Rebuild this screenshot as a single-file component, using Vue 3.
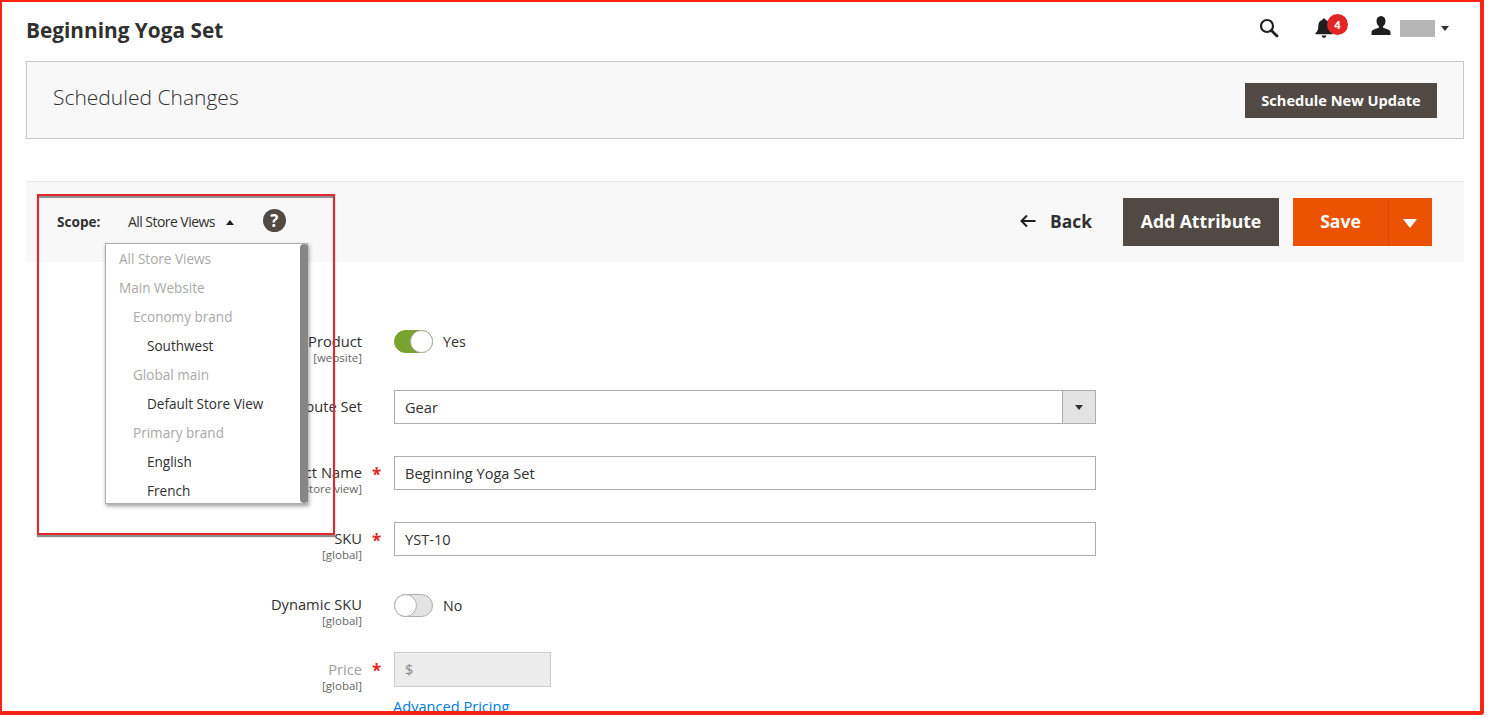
<script setup>
const storeItems = [
  { label: 'All Store Views', level: 0, active: false },
  { label: 'Main Website', level: 0, active: false },
  { label: 'Economy brand', level: 1, active: false },
  { label: 'Southwest', level: 2, active: true },
  { label: 'Global main', level: 1, active: false },
  { label: 'Default Store View', level: 2, active: true },
  { label: 'Primary brand', level: 1, active: false },
  { label: 'English', level: 2, active: true },
  { label: 'French', level: 2, active: true }
]
</script>

<template>
  <div class="frame">
    <header class="topbar">
      <h1 class="title">Beginning Yoga Set</h1>
      <div class="actions">
        <svg class="icon-search" width="20" height="20" viewBox="0 0 20 20" aria-hidden="true">
          <circle cx="8" cy="8" r="6" fill="none" stroke="#1f1f1f" stroke-width="2.2" />
          <path d="M12.4 12.4 18 18" stroke="#1f1f1f" stroke-width="2.8" stroke-linecap="round" />
        </svg>
        <div class="bell">
          <svg width="18" height="22" viewBox="0 0 18 22" aria-hidden="true">
            <path d="M9 1.5c1 0 1.6.7 1.7 1.6 2.7.7 4 3 4 5.700 0 3.700.8 5.600 2.800 7.400v1H.5v-1c2-1.800 2.800-3.700 2.800-7.400 0-2.700 1.300-5 4-5.700C7.400 2.200 8 1.500 9 1.500Z" fill="#1f1f1f" />
            <path d="M6.700 18.600h4.600c0 1.300-1 2.300-2.300 2.300s-2.300-1-2.300-2.300Z" fill="#1f1f1f" />
          </svg>
          <span class="badge">4</span>
        </div>
        <svg class="icon-user" width="20" height="20" viewBox="0 0 20 20" aria-hidden="true">
          <path d="M10 0c2.900 0 4.500 2.200 4.500 5 0 2.300-1 4.300-2.400 5.300v1.500c2.500.9 6.500 2 7.400 3.700V19H.5v-3.500c.9-1.700 4.900-2.800 7.400-3.700v-1.500C6.500 9.300 5.500 7.300 5.500 5 5.500 2.200 7.100 0 10 0Z" fill="#1f1f1f" />
        </svg>
        <span class="user-name"></span>
        <span class="caret-down small"></span>
      </div>
    </header>

    <section class="schedule">
      <h2 class="schedule-title">Scheduled Changes</h2>
      <button class="btn-dark schedule-btn" type="button">Schedule New Update</button>
    </section>

    <section class="toolbar">
      <div class="scope">
        <span class="scope-label">Scope:</span>
        <span class="scope-value">All Store Views</span>
        <span class="caret-up"></span>
        <span class="help">?</span>
      </div>
      <div class="tool-actions">
        <span class="back">
          <svg width="16" height="14" viewBox="0 0 16 14" aria-hidden="true">
            <path d="M15.500 7H2M7 1.500 1.500 7 7 12.500" fill="none" stroke="#1f1f1f" stroke-width="2" />
          </svg>
          Back
        </span>
        <button class="btn-dark attr-btn" type="button">Add Attribute</button>
        <div class="save">
          <span class="save-main">Save</span>
          <span class="save-arrow"><span class="caret-down white"></span></span>
        </div>
      </div>
    </section>

    <form class="form" @submit.prevent>
      <div class="row">
        <div class="label"><span>Enable Product</span><small>[website]</small></div>
        <span class="req"></span>
        <div class="control">
          <span class="toggle on"><i></i></span>
          <span class="toggle-text">Yes</span>
        </div>
      </div>
      <div class="row">
        <div class="label"><span>Attribute Set</span></div>
        <span class="req"></span>
        <div class="select">
          <span class="select-value">Gear</span>
          <span class="select-btn"><span class="caret-down small"></span></span>
        </div>
      </div>
      <div class="row">
        <div class="label"><span>Product Name</span><small>[store view]</small></div>
        <span class="req">*</span>
        <div class="input">Beginning Yoga Set</div>
      </div>
      <div class="row">
        <div class="label"><span>SKU</span><small>[global]</small></div>
        <span class="req">*</span>
        <div class="input">YST-10</div>
      </div>
      <div class="row dense">
        <div class="label"><span>Dynamic SKU</span><small>[global]</small></div>
        <span class="req"></span>
        <div class="control">
          <span class="toggle"><i></i></span>
          <span class="toggle-text">No</span>
        </div>
      </div>
      <div class="row">
        <div class="label muted"><span>Price</span><small>[global]</small></div>
        <span class="req">*</span>
        <div class="price-col">
          <div class="input price">$</div>
          <a class="link" href="#" @click.prevent>Advanced Pricing</a>
        </div>
      </div>
    </form>

    <div class="store-menu">
      <ul class="store-list">
        <li
          v-for="item in storeItems"
          :key="item.label"
          :class="['store-item', 'lvl' + item.level, { active: item.active }]"
        >{{ item.label }}</li>
      </ul>
      <span class="scrollbar"></span>
    </div>
    <div class="annotation"></div>
  </div>
</template>

<style>
html, body { margin: 0; background: #fff; }
</style>

<style scoped>
* { box-sizing: border-box; }
.frame {
  position: relative;
  width: 1484px;
  height: 715px;
  border-style: solid;
  border-color: #fb2218;
  border-width: 2px 4px 4px 2px;
  border-bottom-right-radius: 3px;
  padding: 1px 16px 0 24px;
  overflow: hidden;
  background: #fff;
  font-family: "Open Sans", "Liberation Sans", sans-serif;
  color: #303030;
  font-size: 14px;
}
.topbar {
  height: 58px;
  display: flex;
  align-items: center;
  justify-content: space-between;
}
.title {
  margin: 0 0 2px;
  font-size: 20.8px;
  font-weight: 700;
  color: #303030;
  position: relative;
  top: -1px;
}
.actions {
  display: flex;
  align-items: center;
  padding-right: 15px;
  position: relative;
  top: -4px;
}
.icon-search { margin-right: 36px; }
.bell { position: relative; width: 18px; height: 22px; margin-right: 38px; }
.bell svg { display: block; }
.badge {
  position: absolute;
  left: 12px;
  top: -3px;
  width: 21px;
  height: 21px;
  border-radius: 50%;
  background: #e22626;
  color: #fff;
  font-size: 11px;
  font-weight: 700;
  line-height: 21px;
  text-align: center;
}
.icon-user { margin-right: 9px; position: relative; top: -2px; }
.user-name { width: 35px; height: 17px; background: #b6b6b6; margin-right: 6px; }
.caret-down {
  display: inline-block;
  width: 0;
  height: 0;
  border-left: 6px solid transparent;
  border-right: 6px solid transparent;
  border-top: 8px solid #303030;
}
.caret-down.small { border-left-width: 4px; border-right-width: 4px; border-top-width: 5px; }
.caret-down.white { border-top-color: #fff; border-left-width: 7px; border-right-width: 7px; border-top-width: 9px; }
.caret-up {
  width: 0;
  height: 0;
  border-left: 4px solid transparent;
  border-right: 4px solid transparent;
  border-bottom: 5px solid #1f1f1f;
  margin-left: 11px;
  margin-top: 2px;
}
.schedule {
  height: 78px;
  border: 1px solid #c7c7c7;
  background: #f8f8f8;
  display: flex;
  align-items: center;
  justify-content: space-between;
  padding: 0 26px 0 26px;
}
.schedule-title {
  margin: 0 0 7px;
  font-size: 21px;
  font-weight: 300;
  color: #303030;
}
.btn-dark {
  border: 0;
  background: #514943;
  color: #fff;
  font-family: inherit;
  font-weight: 700;
  padding: 0;
}
.schedule-btn { width: 192px; height: 35px; font-size: 14.6px; margin-top: 0; padding-bottom: 1px; }
.toolbar {
  margin-top: 42px;
  height: 81px;
  background: #f8f8f8;
  border-top: 1px solid #e6e6e6;
  display: flex;
  align-items: center;
  justify-content: space-between;
  padding: 0 32px 0 31px;
}
.scope { display: flex; align-items: center; margin-top: -2px; }
.scope-label { font-weight: 700; font-size: 13.6px; color: #303030; width: 71px; }
.scope-value { font-size: 14px; letter-spacing: -0.55px; color: #303030; }
.help {
  width: 23px;
  height: 23px;
  border-radius: 50%;
  background: #514943;
  color: #fff;
  font-weight: 700;
  font-size: 17px;
  line-height: 23px;
  text-align: center;
  margin: -2px 0 0 29px;
}
.tool-actions { display: flex; align-items: center; }
.back {
  display: flex;
  align-items: center;
  gap: 14px;
  font-size: 17.4px;
  font-weight: 700;
  color: #303030;
  margin-right: 31px;
  margin-top: -2px;
}
.attr-btn { width: 156px; height: 48px; font-size: 17.6px; margin-right: 14px; padding-bottom: 2px; }
.save {
  display: flex;
  width: 139px;
  height: 48px;
  background: #eb5202;
  color: #fff;
  font-size: 17.6px;
  font-weight: 700;
}
.save-main {
  width: 96px;
  border-right: 1px solid #cf4a05;
  display: flex;
  align-items: center;
  justify-content: center;
  padding-bottom: 2px;
}
.save-arrow { flex: 1; display: flex; align-items: center; justify-content: center; padding: 2px 2px 0 0; }
.form { padding-top: 62px; display: flex; flex-direction: column; gap: 32px; }
.row {
  display: grid;
  grid-template-columns: 336px 32px 1fr;
  grid-template-rows: 34px;
  height: 34px;
}
.row.dense { margin-bottom: -2px; }
.label { text-align: right; padding-top: 6px; color: #303030; }
.row:first-child .label { padding-top: 7px; }
.label.muted { padding-top: 7px; }
.label span { display: block; line-height: 20px; font-size: 14.7px; }
.label small { display: block; font-size: 11.5px; line-height: 12px; color: #666; padding-top: 1px; }
.label.muted span { color: #a0a0a0; }
.req { color: #e22626; font-size: 17px; font-weight: 700; padding: 9px 0 0 10px; line-height: 20px; }
.control { display: flex; align-items: center; gap: 10px; }
.toggle {
  position: relative;
  width: 39px;
  height: 23px;
  border-radius: 12px;
  background: #e3e3e3;
  border: 1px solid #adadad;
  display: block;
  margin-top: 1px;
}
.toggle i {
  position: absolute;
  left: -1px;
  top: -1px;
  width: 23px;
  height: 23px;
  border-radius: 50%;
  background: #fff;
  border: 1px solid #adadad;
}
.toggle.on { background: #79a22e; border-color: #79a22e; }
.toggle.on i { left: 15px; }
.toggle-text { font-size: 14.2px; color: #303030; }
.select, .input {
  width: 702px;
  height: 34px;
  border: 1px solid #adadad;
  background: #fff;
  font-size: 14.6px;
  color: #303030;
}
.select { display: flex; align-items: stretch; }
.select-value { flex: 1; padding-left: 10px; line-height: 32px; }
.select-btn {
  width: 33px;
  background: #e3e3e3;
  border-left: 1px solid #adadad;
  display: flex;
  align-items: center;
  justify-content: center;
}
.input { padding-left: 10px; line-height: 32px; }
.price-col { display: flex; flex-direction: column; }
.input.price {
  width: 157px;
  height: 35px;
  background: #ececec;
  border-color: #ccc;
  color: #8a8a8a;
  line-height: 33px;
}
.link {
  color: #007bdb;
  text-decoration: none;
  font-size: 14.6px;
  line-height: 20px;
  margin-top: 9px;
  margin-left: -1px;
}
.store-menu {
  position: absolute;
  left: 103px;
  top: 241px;
  width: 203px;
  height: 261px;
  background: #fff;
  border: 1px solid #adadad;
  box-shadow: 1px 2px 4px rgba(0, 0, 0, 0.4);
}
.store-list { list-style: none; margin: 0; padding: 1px 0 0; }
.store-item {
  height: 29px;
  line-height: 29px;
  font-size: 13.55px;
  color: #a9a9a9;
}
.store-item.lvl0 { padding-left: 13px; }
.store-item.lvl1 { padding-left: 27px; }
.store-item.lvl2 { padding-left: 41px; }
.store-item.active { color: #303030; }
.scrollbar {
  position: absolute;
  right: -1px;
  top: 0;
  bottom: 0;
  width: 8px;
  border-radius: 4px;
  background: #868686;
}
.annotation {
  position: absolute;
  left: 35px;
  top: 192px;
  width: 298px;
  height: 341px;
  border: 2px solid #dd2a2f;
  box-shadow: 0 2px 1px #8d8d8d, inset 0 2px 1px #8d8d8d;
}
</style>
